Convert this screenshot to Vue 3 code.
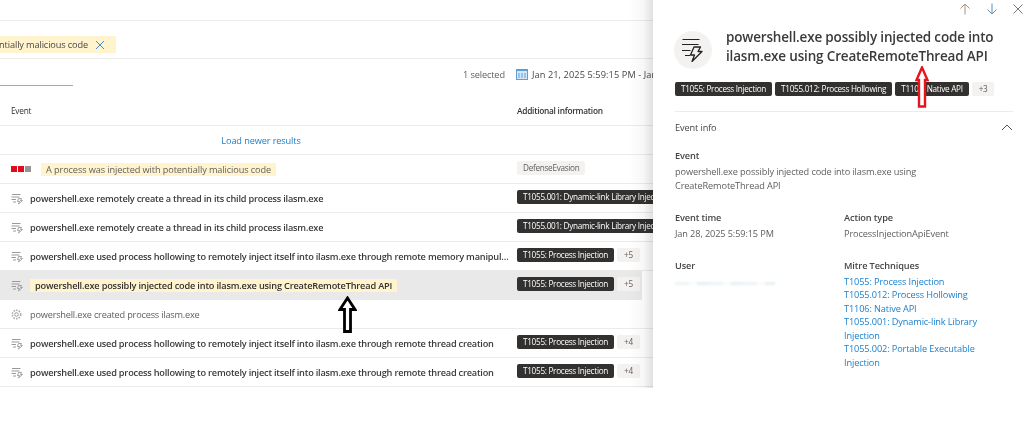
<template>
  <div class="page">
    <div class="main">
      <div class="top-bar"></div>
      <div class="filter-bar">
        <div class="filter-clip">
          <div class="filter-chip">
            <span>A process was injected with potentially malicious code</span>
            <svg width="10" height="10" viewBox="0 0 10 10"><path d="M1 1l8 8M9 1l-8 8" stroke="#3f8fd0" stroke-width="1" fill="none" /></svg>
          </div>
        </div>
      </div>
      <div class="toolbar">
        <div class="tab-line"></div>
        <div class="toolbar-right">
          <span class="selected">1 selected</span>
          <svg width="12" height="12" viewBox="0 0 12 12" class="cal">
            <rect x="0.5" y="1.5" width="11" height="10" fill="#d5e8f7" stroke="#5a9fd8" />
            <rect x="0.5" y="1" width="11" height="2" fill="#5a9fd8" />
            <path d="M3 5v5M6 5v5M9 5v5" stroke="#5a9fd8" fill="none" />
          </svg>
          <span class="dates">Jan 21, 2025 5:59:15 PM - Jan 28, 2025</span>
        </div>
      </div>
      <div class="head-row">
        <div class="col-event head-event">Event</div>
        <div class="col-info">Additional information</div>
      </div>
      <div class="load-row">Load newer results</div>
      <div class="row">
        <div class="col-event">
          <span class="sev"><i class="red"></i><i class="red"></i><i></i></span>
          <span class="hl plain alert">A process was injected with potentially malicious code</span>
        </div>
        <div class="col-info"><span class="tag light">DefenseEvasion</span></div>
      </div>
      <div v-for="(r, i) in rows" :key="i" class="row" :class="{ selected: r.active }">
        <div class="col-event">
          <svg v-if="r.gear" class="ico" width="13" height="13" viewBox="0 0 13 13">
            <circle cx="5.5" cy="6.5" r="1.8" fill="none" stroke="#9a9a9a" />
            <circle cx="5.5" cy="6.5" r="4.2" fill="none" stroke="#a8a8a8" stroke-width="1.5" stroke-dasharray="1.6 1.1" />
          </svg>
          <svg v-else class="ico" width="13" height="13" viewBox="0 0 13 13">
            <path d="M1 2.5h8.5M0.5 5h8M0.5 7.5h4.5M2 10h3" stroke="#9a9a9a" fill="none" />
            <path d="M7.5 6.5h3L9.5 8.5h2L7.5 12l1-2.5H6.5z" stroke="#9a9a9a" stroke-width="0.9" fill="none" />
          </svg>
          <span :class="[r.gear ? 'plain' : 'bold', { hl: r.active }, 'ev-text']">{{ r.text }}</span>
        </div>
        <div class="col-info">
          <span v-if="r.tag" class="tag dark">{{ r.tag }}</span>
          <span v-if="r.more" class="tag light more">{{ r.more }}</span>
        </div>
      </div>
    </div>

    <aside class="panel">
      <div class="panel-nav">
        <svg width="12" height="12" viewBox="0 0 12 12"><path d="M6 11.5V1M1.5 5.5L6 1l4.5 4.5" stroke="#a8927a" fill="none" /></svg>
        <svg width="12" height="12" viewBox="0 0 12 12"><path d="M6 0.5V11M1.5 6.5L6 11l4.5-4.5" stroke="#5f8db5" fill="none" /></svg>
        <svg width="10" height="10" viewBox="0 0 10 10"><path d="M0.5 0.5l9 9M9.5 0.5l-9 9" stroke="#777" fill="none" /></svg>
      </div>
      <div class="panel-title">
        <div class="title-icon">
          <svg width="24" height="24" viewBox="0 0 24 24">
            <path d="M1.5 1.5h17M1 6.5h16.5M1 12.5h8.5M4 17.5h5" stroke="#222" stroke-width="1.2" fill="none" />
            <path d="M13 9h6.5L17 13.5h4L11 23.5l2.5-6.5H9.5z" stroke="#222" stroke-width="1.3" fill="none" stroke-linejoin="round" />
          </svg>
        </div>
        <h1>powershell.exe possibly injected code into ilasm.exe using CreateRemoteThread API</h1>
      </div>
      <div class="panel-tags">
        <span class="tag dark">T1055: Process Injection</span>
        <span class="tag dark">T1055.012: Process Hollowing</span>
        <span class="tag dark">T1106: Native API</span>
        <span class="tag light more">+3</span>
      </div>
      <div class="section-head">
        <span>Event info</span>
        <svg width="12" height="7" viewBox="0 0 12 7"><path d="M1 6l5-5 5 5" stroke="#555" fill="none" /></svg>
      </div>
      <div class="field">
        <div class="label">Event</div>
        <div class="value">powershell.exe possibly injected code into ilasm.exe using<br />CreateRemoteThread API</div>
      </div>
      <div class="field-grid">
        <div>
          <div class="label">Event time</div>
          <div class="value">Jan 28, 2025 5:59:15 PM</div>
        </div>
        <div>
          <div class="label">Action type</div>
          <div class="value">ProcessInjectionApiEvent</div>
        </div>
        <div>
          <div class="label">User</div>
          <div class="redacted"></div>
        </div>
        <div class="mitre">
          <div class="label">Mitre Techniques</div>
          <div class="value link" v-for="m in mitre" :key="m">{{ m }}</div>
        </div>
      </div>
    </aside>

    <svg class="arrow black" width="19" height="37" viewBox="0 0 19 37">
      <path d="M9.5 2L17 13.5H12.5V35.5H6.5V13.5H2z" fill="#fff" stroke="#000" stroke-width="2.8" />
    </svg>
    <svg class="arrow red" width="14" height="42" viewBox="0 0 14 42">
      <path d="M7 1.5L12.5 14H10V40.5H4V14H1.5z" fill="#fff" stroke="#e8141c" stroke-width="2.4" />
    </svg>
  </div>
</template>

<script setup>
const rows = [
  { text: 'powershell.exe remotely create a thread in its child process ilasm.exe', tag: 'T1055.001: Dynamic-link Library Injection' },
  { text: 'powershell.exe remotely create a thread in its child process ilasm.exe', tag: 'T1055.001: Dynamic-link Library Injection' },
  { text: 'powershell.exe used process hollowing to remotely inject itself into ilasm.exe through remote memory manipulation', tag: 'T1055: Process Injection', more: '+5' },
  { text: 'powershell.exe possibly injected code into ilasm.exe using CreateRemoteThread API', tag: 'T1055: Process Injection', more: '+5', active: true },
  { text: 'powershell.exe created process ilasm.exe', gear: true },
  { text: 'powershell.exe used process hollowing to remotely inject itself into ilasm.exe through remote thread creation', tag: 'T1055: Process Injection', more: '+4' },
  { text: 'powershell.exe used process hollowing to remotely inject itself into ilasm.exe through remote thread creation', tag: 'T1055: Process Injection', more: '+4' }
]

const mitre = [
  'T1055: Process Injection',
  'T1055.012: Process Hollowing',
  'T1106: Native API',
  'T1055.001: Dynamic-link Library Injection',
  'T1055.002: Portable Executable Injection'
]
</script>

<style>
html, body {
  margin: 0;
  background: #fff;
}
</style>

<style scoped>
.page {
  position: relative;
  width: 1024px;
  height: 436px;
  display: flex;
  align-items: flex-start;
  overflow: hidden;
  font-family: "Open Sans", "Noto Sans", sans-serif;
  font-size: 9.2px;
  letter-spacing: -0.12px;
  color: #323130;
  background: #fff;
  filter: blur(0.3px);
}
.main {
  width: 653px;
  flex: none;
  overflow: hidden;
}
.top-bar {
  height: 20px;
  border-bottom: 1px solid #edebe9;
}
.filter-bar {
  height: 37px;
  border-bottom: 1px solid #edebe9;
  display: flex;
  align-items: flex-end;
}
.filter-clip {
  width: 116px;
  height: 17px;
  margin-bottom: 5px;
  overflow: hidden;
  display: flex;
  justify-content: flex-end;
}
.filter-chip {
  flex: none;
  display: flex;
  align-items: center;
  gap: 7px;
  padding: 0 11px 0 6px;
  background: #fff4ce;
  white-space: nowrap;
  color: #484644;
}
.toolbar {
  height: 27px;
  display: flex;
  justify-content: space-between;
}
.tab-line {
  width: 73px;
  height: 1px;
  margin-top: 26px;
  background: #a8a8a8;
}
.toolbar-right {
  display: flex;
  align-items: center;
  height: 27px;
  box-sizing: border-box;
  padding-top: 3px;
  white-space: nowrap;
  width: 190px;
  overflow: hidden;
  flex: none;
}
.selected {
  margin-right: 11px;
  color: #605e5c;
}
.cal {
  margin-right: 4px;
  flex: none;
}
.dates {
  color: #484644;
  letter-spacing: 0.1px;
}
.head-row,
.load-row,
.row {
  display: flex;
  align-items: center;
  border-bottom: 1px solid #edebe9;
  box-sizing: border-box;
}
.head-row {
  height: 40px;
  padding-top: 10px;
  font-size: 8.3px;
  font-weight: 600;
  letter-spacing: -0.25px;
}
.head-event {
  font-weight: 500;
}
.load-row {
  height: 29px;
  justify-content: center;
  color: #1a80cf;
  padding-right: 131px;
}
.row {
  height: 29px;
}
.row.selected {
  background: #e9e9e9;
  border-bottom-color: transparent;
}
.col-event {
  width: 517px;
  flex: none;
  box-sizing: border-box;
  padding: 0 8px 0 11px;
  display: flex;
  align-items: center;
  overflow: hidden;
  white-space: nowrap;
}
.col-info {
  flex: 1;
  min-width: 0;
  display: flex;
  align-items: center;
  gap: 3px;
  overflow: hidden;
  white-space: nowrap;
}
.row .col-info {
  padding-bottom: 2px;
}
.sev {
  display: flex;
  gap: 1px;
  margin-right: 10px;
  flex: none;
}
.sev i {
  width: 6px;
  height: 6px;
  background: #979593;
}
.sev i.red {
  background: #e00b1c;
}
.ico {
  margin-right: 6px;
  flex: none;
}
.bold {
  font-weight: 600;
  letter-spacing: -0.21px;
  color: #3b3a39;
}
.plain {
  color: #605e5c;
  letter-spacing: -0.2px;
}
.plain.alert {
  letter-spacing: -0.11px;
}
.ev-text {
  overflow: hidden;
  text-overflow: ellipsis;
}
.hl {
  background: #fff4ce;
  padding: 0 5px;
  line-height: 13px;
}
.row.selected .hl {
  color: #323130;
  letter-spacing: -0.18px;
}
.tag {
  display: inline-block;
  flex: none;
  font-size: 8.2px;
  line-height: 14px;
  padding: 0 6px;
  border-radius: 2px;
  letter-spacing: -0.29px;
}
.tag.dark {
  background: #323130;
  color: #fff;
}
.tag.light {
  background: #f3f2f1;
  color: #605e5c;
}
.tag.more {
  padding: 0 7px;
}
.panel {
  width: 371px;
  height: 388px;
  flex: none;
  box-sizing: border-box;
  padding: 0 11px 0 22px;
  background: #fff;
  position: relative;
}
.panel::before {
  content: "";
  position: absolute;
  left: -24px;
  top: 0;
  width: 24px;
  height: 100%;
  background: linear-gradient(90deg, rgba(0, 0, 0, 0), rgba(0, 0, 0, 0.03) 60%, rgba(0, 0, 0, 0.12));
}
.panel-nav {
  height: 18px;
  display: flex;
  justify-content: flex-end;
  align-items: center;
  gap: 15px;
  margin-right: -10px;
}
.panel-title {
  display: flex;
  align-items: center;
  gap: 14px;
  height: 44px;
  margin-top: 10px;
  margin-left: -1px;
}
.title-icon {
  width: 38px;
  height: 38px;
  border-radius: 50%;
  background: #f3f2f1;
  display: flex;
  align-items: center;
  justify-content: center;
  flex: none;
}
.panel-title h1 {
  margin: 0 0 6px;
  font-size: 13.5px;
  line-height: 19px;
  font-weight: 600;
  letter-spacing: -0.17px;
  color: #3b3a39;
}
.panel-tags {
  display: flex;
  gap: 3px;
  margin-top: 10px;
  padding-bottom: 15px;
  border-bottom: 1px solid #edebe9;
}
.section-head {
  display: flex;
  justify-content: space-between;
  align-items: center;
  height: 30px;
  font-weight: 500;
  color: #484644;
}
.field {
  margin-top: 7px;
}
.label {
  font-weight: 600;
  line-height: 14px;
  color: #484644;
}
.value {
  color: #605e5c;
  line-height: 13.5px;
  margin-top: 2px;
}
.value.link {
  color: #1a80cf;
  margin-top: 0;
}
.label + .value.link {
  margin-top: 2px;
}
.field-grid {
  display: grid;
  grid-template-columns: 169px 1fr;
  grid-auto-rows: auto;
  row-gap: 18px;
  margin-top: 19px;
}
.mitre {
  max-width: 150px;
}
.redacted {
  margin-top: 9px;
  width: 100px;
  height: 3px;
  background: repeating-linear-gradient(90deg, #eef3f8 0 14px, #fafbfc 14px 22px, #e6eef5 22px 34px);
  filter: blur(1px);
}
.arrow {
  position: absolute;
}
.arrow.black {
  left: 338px;
  top: 296px;
}
.arrow.red {
  left: 915px;
  top: 66px;
}
</style>
